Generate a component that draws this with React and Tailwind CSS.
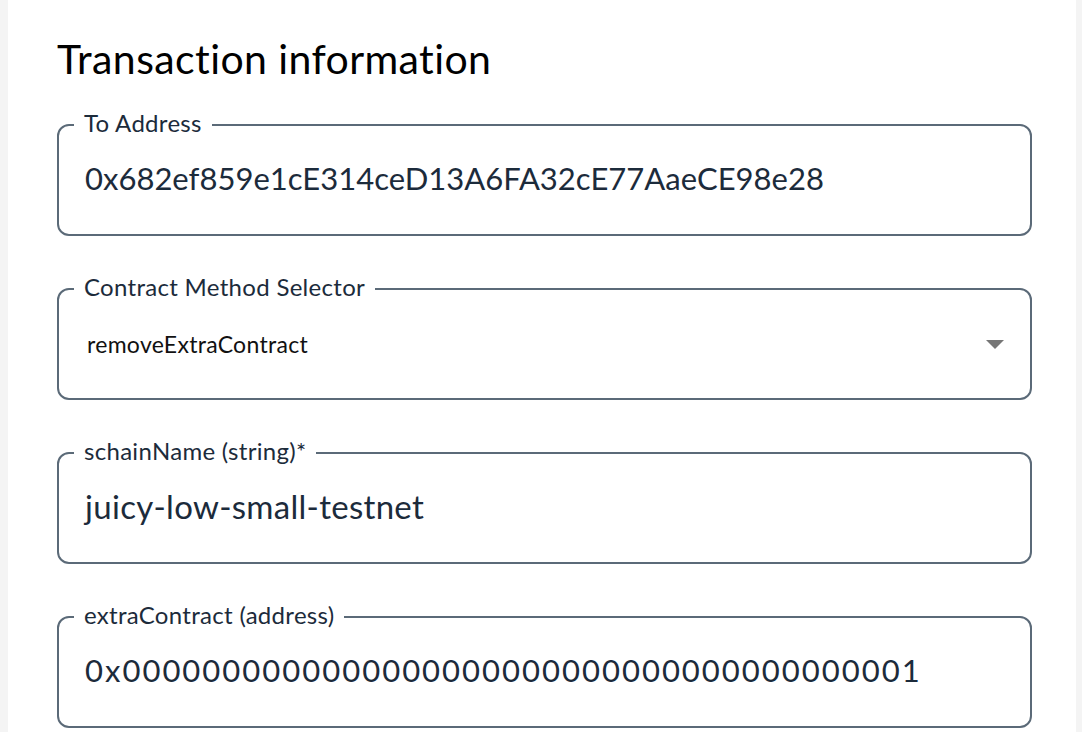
import React from 'react';

const font = { fontFamily: 'Lato, "Open Sans", sans-serif' };

const Field = ({ label, children, select }) => (
  <div className="relative h-[111px] flex items-center pl-7 pr-7">
    <fieldset
      aria-hidden="true"
      className="absolute inset-x-0 bottom-0 top-[-13px] rounded-xl border-2 border-[#5b6a78] pl-[15px] pointer-events-none m-0"
    >
      <legend className="relative -top-[2px] px-[10px] text-[24px] leading-[26px] tracking-[0.3px] text-[#1c2b3b]">{label}</legend>
    </fieldset>
    {children}
    {select && (
      <svg className="ml-auto" width="18" height="9" viewBox="0 0 18 9">
        <path d="M0 0h18L9 9z" fill="#767676" />
      </svg>
    )}
  </div>
);

export default function App() {
  return (
    <div className="min-h-screen bg-[#f4f4f4] pl-2 pr-[6px]" style={font}>
      <div className="bg-white min-h-screen pl-[49px] pr-[44px] pt-[34px]">
        <h1 className="text-[41px] leading-[50px] tracking-[0.4px] text-black mb-[41px]">Transaction information</h1>
        <div className="flex flex-col gap-[53px]">
          <Field label="To Address">
            <span className="text-[31px] text-[#1c2b3b] -mt-1">0x682ef859e1cE314ceD13A6FA32cE77AaeCE98e28</span>
          </Field>
          <Field label="Contract Method Selector" select>
            <span className="text-[23px] tracking-[0.3px] text-[#111] pl-[2px]">removeExtraContract</span>
          </Field>
          <Field label="schainName (string)*">
            <span className="text-[33px] tracking-[0.3px] text-[#1c2b3b] -mt-1">juicy-low-small-testnet</span>
          </Field>
          <Field label="extraContract (address)">
            <span className="text-[31px] tracking-[2px] text-[#1c2b3b] -mt-1">0x0000000000000000000000000000000000000001</span>
          </Field>
        </div>
      </div>
    </div>
  );
}
